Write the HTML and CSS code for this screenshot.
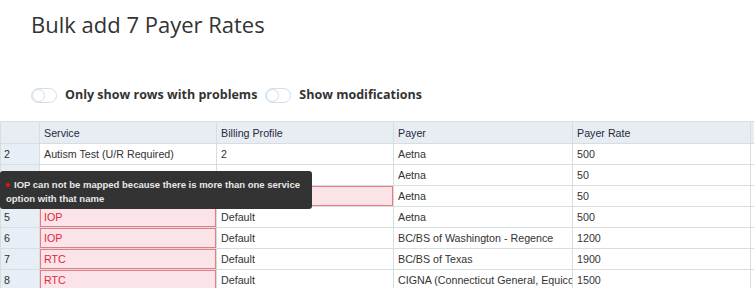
FILE: index.html
```html
<!DOCTYPE html>
<html>
<head>
<meta charset="utf-8">
<link rel="stylesheet" href="styles.css">
</head>
<body>
<div class="page">
  <h1 class="title">Bulk add 7 Payer Rates</h1>
  <div class="filters">
    <label class="toggle"><span class="switch"><span class="knob"></span></span><span class="toggle-label">Only show rows with problems</span></label>
    <label class="toggle"><span class="switch"><span class="knob"></span></span><span class="toggle-label">Show modifications</span></label>
  </div>
  <div class="grid-wrap">
    <table class="grid">
      <colgroup>
        <col class="c-num"><col class="c-svc"><col class="c-bp"><col class="c-payer"><col class="c-rate"><col class="c-extra">
      </colgroup>
      <thead>
        <tr><th></th><th>Service</th><th>Billing Profile</th><th>Payer</th><th>Payer Rate</th><th></th></tr>
      </thead>
      <tbody>
        <tr><td class="num">2</td><td>Autism Test (U/R Required)</td><td>2</td><td>Aetna</td><td>500</td><td></td></tr>
        <tr><td class="num">3</td><td>Autism Test (U/R Required)</td><td>2</td><td>Aetna</td><td>50</td><td></td></tr>
        <tr><td class="num">4</td><td class="err">IOP</td><td class="err">Default</td><td>Aetna</td><td>50</td><td></td></tr>
        <tr><td class="num">5</td><td class="err">IOP</td><td>Default</td><td>Aetna</td><td>500</td><td></td></tr>
        <tr><td class="num">6</td><td class="err">IOP</td><td>Default</td><td>BC/BS of Washington - Regence</td><td>1200</td><td></td></tr>
        <tr><td class="num">7</td><td class="err">RTC</td><td>Default</td><td>BC/BS of Texas</td><td>1900</td><td></td></tr>
        <tr><td class="num">8</td><td class="err">RTC</td><td>Default</td><td class="clip">CIGNA (Connecticut General, Equicor)</td><td>1500</td><td></td></tr>
      </tbody>
    </table>
    <div class="tooltip"><span class="dot"></span>IOP can not be mapped because there is more than one service option with that name</div>
  </div>
</div>
</body>
</html>
```
FILE: styles.css
```css
html, body {
  margin: 0;
  padding: 0;
  background: #fff;
}
.page {
  width: 754px;
  height: 288px;
  overflow: hidden;
}
.title {
  margin: 9px 0 0 31px;
  font-family: "Open Sans", sans-serif;
  font-weight: 400;
  font-size: 22px;
  line-height: 30px;
  color: #333;
}
.filters {
  display: flex;
  align-items: center;
  gap: 8px;
  margin: 48px 0 0 31px;
  height: 16px;
}
.toggle {
  display: flex;
  align-items: center;
  gap: 8px;
}
.switch {
  box-sizing: border-box;
  width: 26px;
  height: 15px;
  border: 1px solid #d3dde9;
  border-radius: 8px;
  background: #fff;
  position: relative;
  display: block;
}
.knob {
  position: absolute;
  left: 0;
  top: 0;
  box-sizing: border-box;
  width: 13px;
  height: 13px;
  border-radius: 50%;
  border: 1px solid #d3dde9;
  background: #fff;
}
.toggle-label {
  font-family: "Open Sans", sans-serif;
  font-weight: 700;
  font-size: 12.5px;
  color: #333;
  line-height: 16px;
}
.grid-wrap {
  position: relative;
  margin-top: 18px;
}
.grid {
  border-collapse: collapse;
  table-layout: fixed;
  width: 780px;
  font-family: "Liberation Sans", Arial, sans-serif;
  font-size: 10.7px;
  color: #333;
}
.c-num { width: 39px; }
.c-svc { width: 177px; }
.c-bp { width: 177px; }
.c-payer { width: 179px; }
.c-rate { width: 178px; }
.c-extra { width: 30px; }
.grid th, .grid td {
  border: 1px solid #d5dfe0;
  height: 21px;
  padding: 0 4px;
  text-align: left;
  white-space: nowrap;
  overflow: hidden;
  box-sizing: border-box;
}
.grid th {
  height: 22px;
  background: #e8edf4;
  font-weight: 400;
  color: #1f2a3a;
}
.grid td.num {
  background: #e8eef5;
  color: #333;
  padding-left: 3px;
}
.grid td.err {
  background: #fbe4e7;
  color: #e0283f;
  box-shadow: inset 0 0 0 1px #ea7a86;
}
.grid td.clip {
  text-overflow: clip;
}
.tooltip {
  position: absolute;
  left: 0;
  top: 50px;
  width: 312px;
  height: 38px;
  box-sizing: border-box;
  padding: 7px 6px 0 6px;
  background: #333;
  border-radius: 3px;
  color: #e8e8e8;
  font-family: "Liberation Sans", Arial, sans-serif;
  font-weight: 700;
  font-size: 9.5px;
  line-height: 14px;
}
.dot {
  display: inline-block;
  width: 4px;
  height: 4px;
  border-radius: 50%;
  background: #f01010;
  margin: 0 4px 1px 0;
  vertical-align: middle;
}
```
